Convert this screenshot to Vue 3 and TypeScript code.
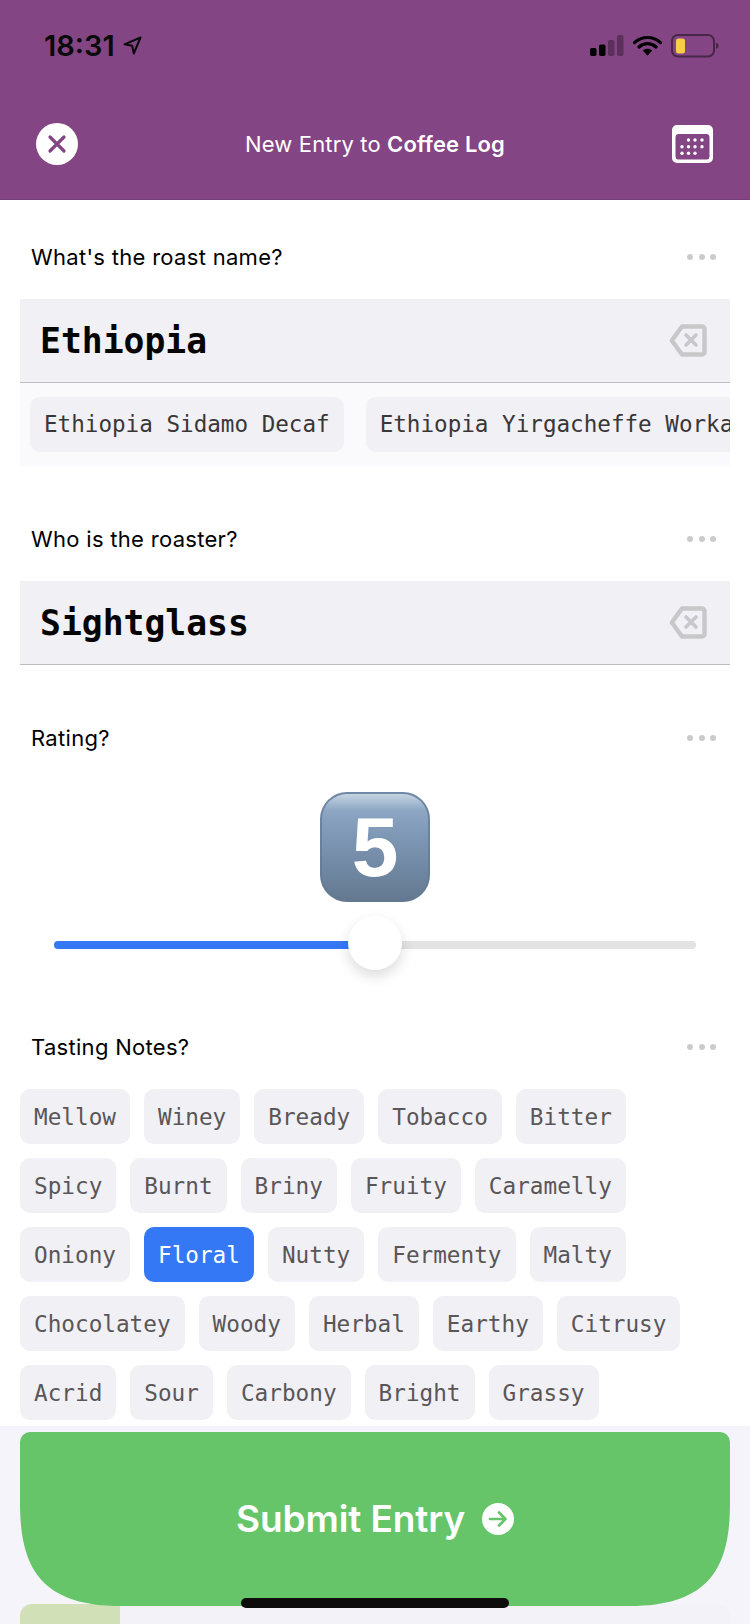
<script setup lang="ts">
const rating = 50
const suggestions: string[] = ['Ethiopia Sidamo Decaf', 'Ethiopia Yirgacheffe Worka']
const noteRows: string[][] = [
  ['Mellow', 'Winey', 'Bready', 'Tobacco', 'Bitter'],
  ['Spicy', 'Burnt', 'Briny', 'Fruity', 'Caramelly'],
  ['Oniony', 'Floral', 'Nutty', 'Fermenty', 'Malty'],
  ['Chocolatey', 'Woody', 'Herbal', 'Earthy', 'Citrusy'],
  ['Acrid', 'Sour', 'Carbony', 'Bright', 'Grassy'],
]
</script>

<template>
  <div class="screen">
    <header class="header">
      <div class="status">
        <div class="time-wrap">
          <span class="time">18:31</span>
          <svg class="loc" width="19" height="19" viewBox="0 0 19 19"><path d="M17.500 1.500 L1.500 8.300 L9.200 9.800 L10.800 17.500 Z" fill="none" stroke="#0a0a0a" stroke-width="2" stroke-linejoin="round"/></svg>
        </div>
        <div class="status-icons">
          <svg width="34" height="22" viewBox="0 0 34 22">
            <rect x="0" y="13" width="6.5" height="8" rx="1.8" fill="#000"/>
            <rect x="9" y="9.5" width="6.5" height="11.5" rx="1.8" fill="#000"/>
            <rect x="18" y="5" width="6.5" height="16" rx="1.8" fill="#000" fill-opacity=".3"/>
            <rect x="27" y="0" width="6.5" height="21" rx="1.8" fill="#000" fill-opacity=".3"/>
          </svg>
          <svg width="29" height="22" viewBox="0 0 29 22">
            <path d="M1.5 7.6 C8.8 .8 20.2 .8 27.5 7.6 M6 12 C10.8 7.6 18.2 7.6 23 12" fill="none" stroke="#000" stroke-width="3.2" stroke-linecap="round"/>
            <path d="M9.8 15.6 C12.6 13 16.4 13 19.2 15.6 L14.5 20.8 Z" fill="#000"/>
          </svg>
          <svg width="48" height="24" viewBox="0 0 48 24">
            <rect x="1" y="1" width="42" height="21.5" rx="6" fill="none" stroke="#000" stroke-opacity=".45" stroke-width="2"/>
            <rect x="5" y="4.5" width="9" height="15" rx="2.5" fill="#f7ce46"/>
            <path d="M45 8.5 C47 9.5 47.6 10.5 47.6 11.7 C47.6 13 47 14 45 15 Z" fill="#000" fill-opacity=".45"/>
          </svg>
        </div>
      </div>
      <div class="nav">
        <div class="close">
          <svg width="20" height="20" viewBox="0 0 20 20"><path d="M3 3 L17 17 M17 3 L3 17" stroke="#834583" stroke-width="3.2" stroke-linecap="round"/></svg>
        </div>
        <div class="title">New Entry to <strong>Coffee Log</strong></div>
        <svg class="cal" width="41" height="38" viewBox="0 0 41 38">
          <path fill-rule="evenodd" d="M5 0 H36 A5 5 0 0 1 41 5 V33 A5 5 0 0 1 36 38 H5 A5 5 0 0 1 0 33 V5 A5 5 0 0 1 5 0 Z M6 9 A3 3 0 0 0 3.500 12 V31.500 A3 3 0 0 0 6 34.500 H35 A3 3 0 0 0 37.500 31.500 V12 A3 3 0 0 0 35 9 Z" fill="#fff"/>
          <g fill="#fff">
            <circle cx="16.500" cy="15" r="1.700"/><circle cx="23" cy="15" r="1.700"/><circle cx="30" cy="15" r="1.700"/>
            <circle cx="10" cy="21.700" r="1.700"/><circle cx="16.500" cy="21.700" r="1.700"/><circle cx="23" cy="21.700" r="1.700"/><circle cx="30" cy="21.700" r="1.700"/>
            <circle cx="10" cy="28.300" r="1.700"/><circle cx="16.500" cy="28.300" r="1.700"/><circle cx="23" cy="28.300" r="1.700"/>
          </g>
        </svg>
      </div>
    </header>

    <section class="field first">
      <div class="label-row"><span class="label">What's the roast name?</span><span class="dots"><i></i><i></i><i></i></span></div>
      <div class="input">
        <span class="value">Ethiopia</span>
        <svg width="38" height="33" viewBox="0 0 38 33"><path d="M13 2.500 H33 A2.500 2.500 0 0 1 35.500 5 V28 A2.500 2.500 0 0 1 33 30.500 H13 L2.800 16.500 Z" fill="none" stroke="#c8c8ca" stroke-width="4.400" stroke-linejoin="round"/><path d="M17 11 L27 21 M27 11 L17 21" stroke="#c8c8ca" stroke-width="3.600" stroke-linecap="round"/></svg>
      </div>
      <div class="suggestions">
        <span v-for="s in suggestions" :key="s" class="suggestion">{{ s }}</span>
      </div>
    </section>

    <section class="field second">
      <div class="label-row"><span class="label">Who is the roaster?</span><span class="dots"><i></i><i></i><i></i></span></div>
      <div class="input">
        <span class="value">Sightglass</span>
        <svg width="38" height="33" viewBox="0 0 38 33"><path d="M13 2.500 H33 A2.500 2.500 0 0 1 35.500 5 V28 A2.500 2.500 0 0 1 33 30.500 H13 L2.800 16.500 Z" fill="none" stroke="#c8c8ca" stroke-width="4.400" stroke-linejoin="round"/><path d="M17 11 L27 21 M27 11 L17 21" stroke="#c8c8ca" stroke-width="3.600" stroke-linecap="round"/></svg>
      </div>
    </section>

    <section class="field third">
      <div class="label-row"><span class="label">Rating?</span><span class="dots"><i></i><i></i><i></i></span></div>
      <div class="emoji"><span>5</span></div>
      <div class="slider">
        <div class="track">
          <div class="fill" :style="{ width: rating + '%' }"></div>
          <div class="thumb" :style="{ left: rating + '%' }"></div>
        </div>
      </div>
    </section>

    <section class="field fourth">
      <div class="label-row"><span class="label">Tasting Notes?</span><span class="dots"><i></i><i></i><i></i></span></div>
      <div class="notes">
        <div v-for="(row, i) in noteRows" :key="i" class="note-row">
          <span v-for="n in row" :key="n" class="note" :class="{ active: n === 'Floral' }">{{ n }}</span>
        </div>
      </div>
    </section>

    <footer class="footer">
      <div class="submit">
        <span>Submit Entry</span>
        <svg width="32" height="32" viewBox="0 0 32 32"><circle cx="16" cy="16" r="16" fill="#fff"/><path d="M8 16 H23 M17 9.500 L23.500 16 L17 22.500" fill="none" stroke="#66c569" stroke-width="2.600" stroke-linecap="round" stroke-linejoin="round"/></svg>
      </div>
      <div class="progress"><div class="progress-fill"></div></div>
      <div class="home"></div>
    </footer>
  </div>
</template>

<style>
html, body { margin: 0; background: #fff; }
</style>

<style scoped>
.screen {
  position: relative;
  width: 750px;
  height: 1624px;
  overflow: hidden;
  display: flex;
  flex-direction: column;
  font-family: Inter, "Noto Sans", sans-serif;
  background: #fff;
}
.header {
  flex: none;
  height: 200px;
  box-sizing: border-box;
  background: #834583;
  border-bottom: 1px solid #73407a;
  display: flex;
  flex-direction: column;
}
.status {
  padding: 34px 31px 0 44px;
  height: 24px;
  display: flex;
  justify-content: space-between;
  align-items: center;
}
.time-wrap { display: flex; align-items: center; gap: 8px; }
.time { font-size: 29px; font-weight: 600; color: #0a0a0a; line-height: 24px; }
.loc { margin-top: -1px; }
.status-icons { display: flex; align-items: center; gap: 9px; }
.nav {
  margin-top: 65px;
  padding: 0 37px 0 36px;
  height: 42px;
  display: flex;
  align-items: center;
  justify-content: space-between;
}
.close {
  width: 42px;
  height: 42px;
  border-radius: 50%;
  background: #fff;
  display: flex;
  align-items: center;
  justify-content: center;
}
.title { color: #fff; font-size: 22px; letter-spacing: .15px; }
.title strong { font-weight: 600; }
.label-row {
  height: 40px;
  padding: 0 34px 0 31px;
  display: flex;
  align-items: center;
  justify-content: space-between;
}
.label { font-size: 22px; font-weight: 400; letter-spacing: .3px; color: #000; }
.dots { display: flex; gap: 5.500px; }
.dots i { width: 6px; height: 6px; border-radius: 50%; background: #cbcbcb; display: block; }
.field { flex: none; padding: 0 20px; display: flex; flex-direction: column; }
.field.first { margin-top: 37px; }
.field.second { margin-top: 53px; }
.field.third { margin-top: 53px; }
.field.fourth { margin-top: 57px; }
.field .label-row { margin: 0 -20px; }
.input {
  margin-top: 22px;
  height: 84px;
  box-sizing: border-box;
  background: #f0f0f5;
  border-bottom: 1px solid #bcbcc0;
  display: flex;
  align-items: center;
  justify-content: space-between;
  padding: 0 23px 0 20px;
}
.value {
  font-family: "DejaVu Sans Mono", monospace;
  font-weight: 700;
  font-size: 34.700px;
  color: #050505;
}
.suggestions {
  height: 83px;
  box-sizing: border-box;
  background: #fafafc;
  padding: 14px 0 14px 10px;
  display: flex;
  gap: 22px;
  overflow: hidden;
}
.suggestion {
  flex: none;
  height: 55px;
  line-height: 55px;
  padding: 0 14px;
  border-radius: 10px;
  background: #f0f0f5;
  font-family: "DejaVu Sans Mono", monospace;
  font-size: 22.600px;
  color: #3a3638;
  white-space: nowrap;
}
.emoji {
  margin: 34px auto 0;
  width: 110px;
  height: 110px;
  border-radius: 27px;
  box-sizing: border-box;
  border: 2px solid transparent;
  background:
    linear-gradient(180deg, #c6d3e2 0%, #8ba5c2 16%, #7e97b5 40%, #647991 100%) padding-box,
    linear-gradient(180deg, #6f88a6 0%, #647991 100%) border-box;
  display: flex;
  align-items: center;
  justify-content: center;
}
.emoji span { color: #fff; font-family: "Liberation Sans", sans-serif; font-weight: 700; font-size: 84px; line-height: 1; }
.slider { margin-top: 14px; height: 54px; padding: 25px 34px 0; box-sizing: border-box; }
.track { position: relative; height: 8px; border-radius: 4px; background: #e3e3e3; }
.fill { height: 100%; border-radius: 4px; background: #3478f6; }
.thumb {
  position: absolute;
  top: -25px;
  width: 54px;
  height: 54px;
  margin-left: -27px;
  border-radius: 50%;
  background: #fff;
  box-shadow: 0 6px 14px rgba(0, 0, 0, .14);
}
.notes { margin-top: 22px; display: flex; flex-direction: column; gap: 14px; }
.note-row { display: flex; gap: 14px; }
.note {
  height: 55px;
  line-height: 57px;
  padding: 0 14px;
  border-radius: 10px;
  background: #f0f0f5;
  font-family: "DejaVu Sans Mono", monospace;
  font-size: 22.700px;
  color: #5a5658;
}
.note.active { background: #3478f6; color: #fff; }
.footer {
  position: relative;
  margin-top: 6px;
  flex: 1;
  min-height: 0;
  background: #f4f4fa;
  padding: 6px 20px 0;
}
.submit {
  position: relative;
  z-index: 1;
  height: 174px;
  background: #66c569;
  clip-path: path("M10 0 H700 A10 10 0 0 1 710 10 V70 C710 130 694 174 610 174 H100 C16 174 0 130 0 70 V10 A10 10 0 0 1 10 0 Z");
  display: flex;
  align-items: center;
  justify-content: center;
  gap: 18px;
  color: #fff;
  font-size: 37px;
  font-weight: 600;
  letter-spacing: -.1px;
}
.submit svg { margin-left: -1px; }
.submit span { margin-top: -1px; }
.progress { margin-top: -2px; height: 20px; background: #f2f2f8; border-radius: 12px 12px 0 0; overflow: hidden; }
.progress-fill { width: 100px; height: 100%; background: #d2e0b8; }
.home {
  position: absolute;
  z-index: 2;
  left: 241px;
  top: 172px;
  width: 268px;
  height: 10px;
  border-radius: 5px;
  background: #0d0d0d;
}
</style>
